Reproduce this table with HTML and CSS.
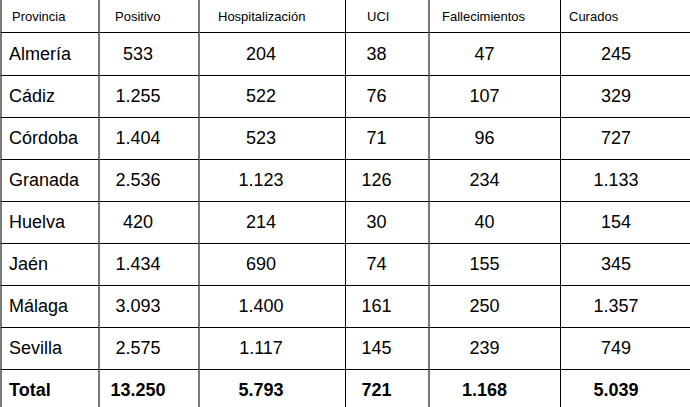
FILE: index.html
```html
<!DOCTYPE html>
<html lang="es">
<head>
<meta charset="utf-8">
<title>Datos COVID Andalucía</title>
<link rel="stylesheet" href="styles.css">
</head>
<body>
<div class="grid" role="table">
  <div class="cell head c1">Provincia</div>
  <div class="cell head c2">Positivo</div>
  <div class="cell head c3">Hospitalización</div>
  <div class="cell head c4">UCI</div>
  <div class="cell head c5">Fallecimientos</div>
  <div class="cell head c6">Curados</div>

  <div class="cell name c1">Almería</div>
  <div class="cell num c2">533</div>
  <div class="cell num c3">204</div>
  <div class="cell num c4">38</div>
  <div class="cell num c5">47</div>
  <div class="cell num c6">245</div>

  <div class="cell name c1">Cádiz</div>
  <div class="cell num c2">1.255</div>
  <div class="cell num c3">522</div>
  <div class="cell num c4">76</div>
  <div class="cell num c5">107</div>
  <div class="cell num c6">329</div>

  <div class="cell name c1">Córdoba</div>
  <div class="cell num c2">1.404</div>
  <div class="cell num c3">523</div>
  <div class="cell num c4">71</div>
  <div class="cell num c5">96</div>
  <div class="cell num c6">727</div>

  <div class="cell name c1">Granada</div>
  <div class="cell num c2">2.536</div>
  <div class="cell num c3">1.123</div>
  <div class="cell num c4">126</div>
  <div class="cell num c5">234</div>
  <div class="cell num c6">1.133</div>

  <div class="cell name c1">Huelva</div>
  <div class="cell num c2">420</div>
  <div class="cell num c3">214</div>
  <div class="cell num c4">30</div>
  <div class="cell num c5">40</div>
  <div class="cell num c6">154</div>

  <div class="cell name c1">Jaén</div>
  <div class="cell num c2">1.434</div>
  <div class="cell num c3">690</div>
  <div class="cell num c4">74</div>
  <div class="cell num c5">155</div>
  <div class="cell num c6">345</div>

  <div class="cell name c1">Málaga</div>
  <div class="cell num c2">3.093</div>
  <div class="cell num c3">1.400</div>
  <div class="cell num c4">161</div>
  <div class="cell num c5">250</div>
  <div class="cell num c6">1.357</div>

  <div class="cell name c1">Sevilla</div>
  <div class="cell num c2">2.575</div>
  <div class="cell num c3">1.117</div>
  <div class="cell num c4">145</div>
  <div class="cell num c5">239</div>
  <div class="cell num c6">749</div>

  <div class="cell name c1 total">Total</div>
  <div class="cell num c2 total">13.250</div>
  <div class="cell num c3 total">5.793</div>
  <div class="cell num c4 total">721</div>
  <div class="cell num c5 total">1.168</div>
  <div class="cell num c6 total">5.039</div>
</div>
</body>
</html>
```
FILE: styles.css
```css
html, body {
  margin: 0;
  padding: 0;
  background: #ffffff;
}

body {
  width: 690px;
  height: 407px;
  overflow: hidden;
  font-family: "Liberation Sans", Arial, sans-serif;
  color: #000000;
}

.grid {
  display: grid;
  width: 692px;
  grid-template-columns: 100px 100px 146px 84px 131px 131px;
  grid-template-rows: 33px 43px repeat(8, 42px);
}

.cell {
  box-sizing: border-box;
  display: flex;
  align-items: center;
  border-bottom: 1px solid #000000;
  white-space: nowrap;
}

.c1 {
  border-left: 2px solid #7a7a7a;
  border-right: 2px solid #7a7a7a;
}

.c2 {
  border-right: 2px solid #7a7a7a;
}

.c3 {
  border-right: 1px solid #000000;
}

.c4 {
  border-right: 2px solid #7a7a7a;
}

.c5 {
  border-right: 1px solid #000000;
}

.head {
  font-size: 13px;
  justify-content: flex-start;
}

.head.c1 { padding-left: 10px; }
.head.c2 { padding-left: 15px; }
.head.c3 { padding-left: 18px; }
.head.c4 { padding-left: 21px; }
.head.c5 { padding-left: 12px; }
.head.c6 { padding-left: 8px; }

.name {
  font-size: 18px;
  padding-left: 7px;
}

.num {
  font-size: 18px;
  justify-content: center;
  padding-right: 22px;
}

.num.c3 { padding-right: 23px; }
.num.c4 { padding-right: 21px; }
.num.c5 { padding-right: 21px; }
.num.c6 { padding-right: 21px; }

.total {
  font-weight: bold;
}
```
